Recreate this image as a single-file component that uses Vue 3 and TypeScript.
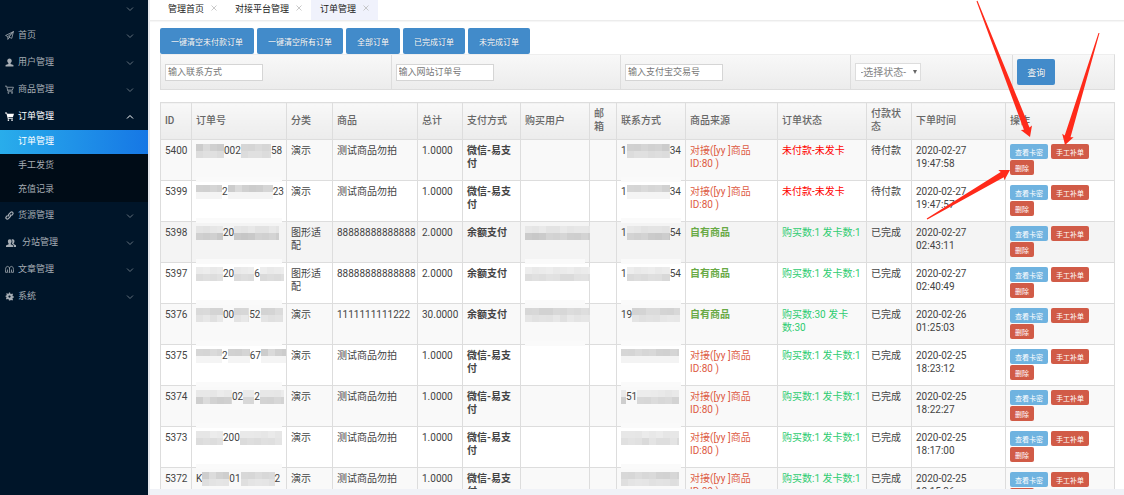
<script setup lang="ts">
import { ref } from 'vue'

interface MenuItem {
  icon: string
  label: string
  open?: boolean
  wide?: boolean
  children?: string[]
}

// A number is the width of a pixelated stretch, a string is readable text.
type Piece = string | number

interface Order {
  id: string
  no: Piece[]
  kind: string
  goods: string
  total: string
  pay: string
  buyer: Piece[]
  contact: Piece[]
  source: 'linked' | 'own'
  status: string
  paid: boolean
  time: string
  shade: [number, number]
}

const menu: MenuItem[] = [
  { icon: 'plane', label: '首页' },
  { icon: 'user', label: '用户管理' },
  { icon: 'cart', label: '商品管理' },
  { icon: 'cartFull', label: '订单管理', open: true, children: ['订单管理', '手工发货', '充值记录'] },
  { icon: 'link', label: '货源管理' },
  { icon: 'users', label: '分站管理', wide: true },
  { icon: 'book', label: '文章管理' },
  { icon: 'gear', label: '系统' },
]

const tabs = ['管理首页', '对接平台管理', '订单管理']
const activeTab = ref(2)
const bulkActions = ['一键清空未付款订单', '一键清空所有订单', '全部订单', '已完成订单', '未完成订单']

const contact = ref('')
const orderNo = ref('')
const tradeNo = ref('')
const state = ref('')

const columns = [
  { name: 'ID', width: 31 },
  { name: '订单号', width: 95 },
  { name: '分类', width: 46 },
  { name: '商品', width: 85 },
  { name: '总计', width: 45 },
  { name: '支付方式', width: 58 },
  { name: '购买用户', width: 69 },
  { name: '邮箱', width: 27 },
  { name: '联系方式', width: 69 },
  { name: '商品来源', width: 92 },
  { name: '订单状态', width: 89 },
  { name: '付款状态', width: 45 },
  { name: '下单时间', width: 94 },
  { name: '操作', width: 109 },
]

const wechat = '微信-易支付'
const balance = '余额支付'
const trial = '测试商品勿拍'

const orders: Order[] = [
  { id: '5400', no: [28, '002', 30, '58'], kind: '演示', goods: trial, total: '1.0000', pay: wechat, buyer: [], contact: ['1', 43, '34'], source: 'linked', status: '未付款-未发卡', paid: false, time: '2020-02-27 19:47:58', shade: [204, 220] },
  { id: '5399', no: [26, '2', 45, '23'], kind: '演示', goods: trial, total: '1.0000', pay: wechat, buyer: [], contact: ['1', 43, '34'], source: 'linked', status: '未付款-未发卡', paid: false, time: '2020-02-27 19:47:57', shade: [204, 243] },
  { id: '5398', no: [27, '20', 45], kind: '图形适配', goods: '88888888888888', total: '2.0000', pay: balance, buyer: [65], contact: ['1', 43, '54'], source: 'own', status: '购买数:1 发卡数:1', paid: true, time: '2020-02-27 02:43:11', shade: [226, 198] },
  { id: '5397', no: [27, '20', 20, '6', 24], kind: '图形适配', goods: '88888888888888', total: '2.0000', pay: balance, buyer: [65], contact: ['1', 43, '54'], source: 'own', status: '购买数:1 发卡数:1', paid: true, time: '2020-02-27 02:40:49', shade: [232, 216] },
  { id: '5376', no: [27, '00', 15, '52', 22], kind: '演示', goods: '1111111111222', total: '30.0000', pay: balance, buyer: [65], contact: ['19', 48], source: 'own', status: '购买数:30 发卡数:30', paid: true, time: '2020-02-26 01:25:03', shade: [210, 224] },
  { id: '5375', no: [26, '2', 22, '67', 25], kind: '演示', goods: trial, total: '1.0000', pay: wechat, buyer: [], contact: [58], source: 'linked', status: '购买数:1 发卡数:1', paid: true, time: '2020-02-25 18:23:12', shade: [204, 243] },
  { id: '5374', no: [36, '02', 11, '2', 24], kind: '演示', goods: trial, total: '1.0000', pay: wechat, buyer: [], contact: [5, '51', 42], source: 'linked', status: '购买数:1 发卡数:1', paid: true, time: '2020-02-25 18:22:27', shade: [230, 206] },
  { id: '5373', no: [27, '200', 42], kind: '演示', goods: trial, total: '1.0000', pay: wechat, buyer: [], contact: [58], source: 'linked', status: '购买数:1 发卡数:1', paid: true, time: '2020-02-25 18:17:00', shade: [230, 218] },
  { id: '5372', no: ['K', 27, '01', 34, '2'], kind: '演示', goods: trial, total: '1.0000', pay: wechat, buyer: [], contact: [58], source: 'linked', status: '购买数:1 发卡数:1', paid: true, time: '2020-02-25 18:15:36', shade: [206, 222] },
]

// Shades of the pixelated tiles, seeded so that each stretch has its own pattern.
function tiles(width: number, shade: [number, number], seed: number) {
  const out: { x: number; y: number; w: number; fill: string }[] = []
  const size = 7
  for (let x = 0, i = 0; x < width; x += size, i++) {
    for (let j = 0; j < 2; j++) {
      const base = shade[j] ?? 220
      const spread = Math.round((250 - base) / 3)
      const grey = base + ((seed * 5 + i * 11 + i * i * 3) % spread)
      out.push({ x, y: j * size, w: Math.min(size, width - x), fill: `rgb(${grey},${grey},${grey})` })
    }
  }
  return out
}

// A tapering shaft that ends in a barbed head.
function arrow(x1: number, y1: number, x2: number, y2: number) {
  const len = Math.hypot(x2 - x1, y2 - y1)
  const ux = (x2 - x1) / len
  const uy = (y2 - y1) / len
  const at = (back: number, side: number) =>
    `${(x2 - ux * back - uy * side).toFixed(1)},${(y2 - uy * back + ux * side).toFixed(1)}`
  return [at(len, 0.5), at(9, 3), at(10, 6), at(0, 0), at(10, -6), at(9, -3), at(len, -0.5)].join(' ')
}

const arrows = [arrow(977, 1, 1030, 137), arrow(1099, 33, 1065, 145), arrow(927, 219, 1010, 170)]
</script>

<template>
  <div class="page">
    <aside class="side">
      <div class="item first">
        <svg class="chev" viewBox="0 0 8 8"><path d="M1 2.5 4 5.5 7 2.5" /></svg>
      </div>
      <nav>
        <template v-for="m in menu" :key="m.label + m.icon">
          <a href="#" class="item" :class="{ open: m.open, wide: m.wide }">
            <svg class="icon" viewBox="0 0 16 16">
              <g v-if="m.icon === 'plane'" class="line"><path d="M15 1 1 8l4 2 10-9-8 10 5 2zM5 10v5l3-4" /></g>
              <path v-else-if="m.icon === 'user'" d="M8 1c2.500 0 4 1.800 4 4 0 1.800-.8 3.200-2 4v1.500l5 2V15H1v-2.500l5-2V9C4.800 8.200 4 6.800 4 5c0-2.200 1.500-4 4-4z" />
              <g v-else-if="m.icon === 'cart'" class="line"><path d="M0 2h3l2 9h9M4 4h11l-2 5H5" /><circle cx="6" cy="14" r="1" /><circle cx="12.500" cy="14" r="1" /></g>
              <g v-else-if="m.icon === 'cartFull'"><path d="M0 1h3.500l.6 2H16l-2 6.500H6l.3 1.500H14v1.500H5L2.500 2.500H0z" /><circle cx="6" cy="14.300" r="1.500" /><circle cx="12.500" cy="14.300" r="1.500" /></g>
              <g v-else-if="m.icon === 'link'" class="line thick"><path d="M7 9.500c-1.500-1.500-1-3 0-4l3-3c2.500-2.500 6 1 3.500 3.500L11.500 8M9 6.500c1.500 1.500 1 3 0 4l-3 3c-2.500 2.500-6-1-3.500-3.500L4.500 8" /></g>
              <g v-else-if="m.icon === 'users'"><path d="M6 2c2 0 3 1.400 3 3.200S8.300 8 7.600 8.600v1.200L11.500 12v2.500H0V12l4.200-2.200V8.600C3.400 8 3 7 3 5.200S4 2 6 2z" /><path d="M10.500 2c2 0 3 1.200 3 3s-.6 2.800-1.300 3.400v1L16 11.500v3h-3.500v-3L9.300 9.300c1.400-2 1.200-5-.3-6.800.4-.4 1-.5 1.500-.5z" /></g>
              <g v-else-if="m.icon === 'book'" class="line"><path d="M1 13V8c0-7 6-7 7-2 1-5 7-5 7 2v5h-3.500V8M4.500 13V8M1 13h3.500M8 5v8M6.500 13h3" /></g>
              <g v-else><path fill-rule="evenodd" d="M7 1h2l.5 2 1.500.6 2-1 1.300 1.300-1 2 .6 1.500 2 .5v2l-2 .5-.6 1.500 1 2-1.300 1.300-2-1-1.500.6L9 15H7l-.5-2-1.500-.6-2 1L1.700 12.100l1-2-.6-1.500L1 8.500v-2l1.500-.5.6-1.500-1-1.500L3.300 2l2 1L6.500 3zM8 6a2 2 0 1 0 0 4 2 2 0 0 0 0-4z" /></g>
            </svg>
            <span class="label">{{ m.label }}</span>
            <svg class="chev" viewBox="0 0 8 8"><path :d="m.open ? 'M1 5.500 4 2.500 7 5.500' : 'M1 2.500 4 5.500 7 2.500'" /></svg>
          </a>
          <div v-if="m.children" class="sub">
            <a v-for="(c, i) in m.children" :key="c" href="#" :class="{ current: i === 0 }">{{ c }}</a>
          </div>
        </template>
      </nav>
    </aside>

    <main class="main">
      <div class="tabs">
        <button v-for="(t, i) in tabs" :key="t" type="button" class="tab" :class="{ active: i === activeTab }" @click="activeTab = i">
          {{ t }}
          <svg class="close" viewBox="0 0 6 6"><path d="M.5.5l5 5M5.500.5l-5 5" /></svg>
        </button>
      </div>

      <div class="content">
        <div class="bulk">
          <button v-for="b in bulkActions" :key="b" type="button" class="btn">{{ b }}</button>
        </div>
        <form class="search" @submit.prevent>
          <div><input v-model="contact" type="text" aria-label="联系方式" placeholder="输入联系方式" /></div>
          <div><input v-model="orderNo" type="text" aria-label="网站订单号" placeholder="输入网站订单号" /></div>
          <div><input v-model="tradeNo" type="text" aria-label="支付宝交易号" placeholder="输入支付宝交易号" /></div>
          <div>
            <span class="select">
              <select v-model="state" aria-label="选择状态"><option value="">-选择状态-</option></select>
              <svg viewBox="0 0 4 4"><path d="M0 0h4L2 4z" /></svg>
            </span>
          </div>
          <div><button type="submit" class="btn query">查询</button></div>
        </form>

        <table class="orders">
          <colgroup><col v-for="c in columns" :key="c.name" :style="{ width: c.width + 'px' }" /></colgroup>
          <thead>
            <tr><th v-for="c in columns" :key="c.name" scope="col">{{ c.name }}</th></tr>
          </thead>
          <tbody>
            <tr v-for="(o, r) in orders" :key="o.id" :class="{ hovered: r === 2 }">
              <td>{{ o.id }}</td>
              <td class="masked">
                <span class="pieces">
                  <template v-for="(p, i) in o.no" :key="i">
                    <svg v-if="typeof p === 'number'" class="mosaic" :width="p" height="14"><rect v-for="(t, k) in tiles(p, o.shade, r + i)" :key="k" :x="t.x" :y="t.y" :width="t.w" height="7" :fill="t.fill" /></svg>
                    <span v-else>{{ p }}</span>
                  </template>
                </span>
              </td>
              <td>{{ o.kind }}</td>
              <td>{{ o.goods }}</td>
              <td>{{ o.total }}</td>
              <td class="pay">{{ o.pay }}</td>
              <td :class="{ masked: o.buyer.length }">
                <span class="pieces">
                  <svg v-for="(p, i) in o.buyer" :key="i" class="mosaic" :width="p" height="14"><rect v-for="(t, k) in tiles(Number(p), o.shade, 1)" :key="k" :x="t.x" :y="t.y" :width="t.w" height="7" :fill="t.fill" /></svg>
                </span>
              </td>
              <td></td>
              <td class="masked">
                <span class="pieces">
                  <template v-for="(p, i) in o.contact" :key="i">
                    <svg v-if="typeof p === 'number'" class="mosaic" :width="p" height="14"><rect v-for="(t, k) in tiles(p, o.shade, r + i + 3)" :key="k" :x="t.x" :y="t.y" :width="t.w" height="7" :fill="t.fill" /></svg>
                    <span v-else>{{ p }}</span>
                  </template>
                </span>
              </td>
              <td v-if="o.source === 'own'" class="own">自有商品</td>
              <td v-else class="linked">对接([yy ]商品<br />ID:80 )</td>
              <td :class="o.paid ? 'done' : 'unpaid'">{{ o.status }}</td>
              <td>{{ o.paid ? '已完成' : '待付款' }}</td>
              <td class="time">{{ o.time }}</td>
              <td>
                <div class="ops">
                  <button type="button" class="info">查看卡密</button>
                  <button type="button">手工补单</button>
                  <button type="button">删除</button>
                </div>
              </td>
            </tr>
          </tbody>
        </table>
      </div>
      <div class="foot"></div>
    </main>

    <svg class="arrows" width="1124" height="495" viewBox="0 0 1124 495">
      <polygon v-for="a in arrows" :key="a" :points="a" />
    </svg>
  </div>
</template>

<style>
body {
  margin: 0;
  overflow: hidden;
}
</style>

<style scoped>
.page {
  position: relative;
  display: flex;
  height: 100vh;
  overflow: hidden;
  background: #fff;
  color: #444;
  font-family: Roboto, "Noto Sans CJK SC", sans-serif;
  font-size: 10px;
  line-height: 13px;
}
.page * {
  box-sizing: border-box;
}
button,
input,
select {
  margin: 0;
  font-family: inherit;
}
.side {
  flex: none;
  width: 148px;
  background: #001529;
  font-size: 9px;
}
.item {
  display: flex;
  align-items: center;
  height: 27px;
  padding: 0 14px 0 5px;
  color: #a6adb4;
  text-decoration: none;
}
.item.first {
  height: 22px;
  padding-bottom: 4px;
}
.item.open {
  color: #fff;
}
.icon {
  width: 9px;
  height: 9px;
  margin-right: 4px;
  fill: currentColor;
}
.wide .icon {
  width: 12px;
  height: 10px;
  margin-right: 5px;
}
.line {
  fill: none;
  stroke: currentColor;
  stroke-width: 1.4;
}
.thick {
  stroke-width: 2.2;
}
.chev {
  width: 8px;
  height: 8px;
  margin-left: auto;
  fill: none;
  stroke: #63707c;
}
.open .chev {
  stroke: #fff;
}
.sub {
  background: #000c17;
}
.sub a {
  display: block;
  height: 24px;
  padding-left: 18px;
  color: #a6adb4;
  line-height: 23px;
  text-decoration: none;
}
.sub .current {
  background: linear-gradient(90deg, #29adeb, #1677e5);
  color: #fff;
}
.main {
  display: flex;
  flex: 1;
  flex-direction: column;
  min-width: 0;
  border-left: 2px solid #e6e8ed;
}
.tabs {
  display: flex;
  flex: none;
  height: 21px;
  padding-left: 9px;
  border-bottom: 1px solid #ececec;
  box-shadow: 0 1px 1px #f6f6f6;
}
.tab {
  display: flex;
  align-items: center;
  gap: 7px;
  padding: 0 9px 4px;
  border: 0;
  background: none;
  color: #222;
  font-size: 9px;
}
.tab.active {
  background: #f0f2fc;
}
.close {
  width: 6px;
  height: 6px;
  stroke: #bbb;
  stroke-width: 0.8;
}
.content {
  flex: 1;
  min-height: 0;
  padding: 7px 9px 0 10px;
  overflow: hidden;
}
.foot {
  flex: none;
  height: 6px;
  background: #f0f2f7;
}
.bulk {
  display: flex;
  gap: 3px;
}
.btn {
  height: 26px;
  padding: 0 11px;
  border: 0;
  border-radius: 2px;
  background: #428bca;
  color: #fff;
  font-size: 8px;
  text-shadow: 0 0 1px #2a6496;
}
.btn.query {
  padding: 0 10px;
  font-size: 9px;
}
.search {
  display: grid;
  grid-template-columns: 230fr 230fr 230fr 163fr 102fr;
  height: 36px;
  border: 1px solid #ddd;
  border-top-color: #eee;
  background: linear-gradient(#f8f8f8, #ececec);
}
.search > div {
  display: flex;
  align-items: center;
  padding-left: 4px;
}
.search > div + div {
  border-left: 1px solid #ddd;
}
.search input {
  width: 98px;
  height: 17px;
  padding: 0 2px;
  border: 1px solid #d5d5d5;
  background: #fff;
  color: #555;
  font-size: 9px;
}
.search input::placeholder {
  color: #777;
}
.select {
  position: relative;
  display: block;
}
.select select {
  width: 66px;
  height: 18px;
  padding: 0 5px;
  border: 1px solid #ddd;
  border-radius: 0;
  background: #fff;
  appearance: none;
  color: #858585;
  font-size: 10px;
}
.select svg {
  position: absolute;
  top: 7px;
  right: 4px;
  width: 4px;
  height: 4px;
  fill: #666;
}
.orders {
  width: 100%;
  margin-top: 12px;
  border-collapse: collapse;
  table-layout: fixed;
}
.orders th,
.orders td {
  padding: 4px 4px 0;
  border: 1px solid #ddd;
  text-align: left;
  vertical-align: top;
}
.orders th {
  height: 37px;
  padding: 0 4px 2px;
  background: linear-gradient(#f8f8f8, #ececec);
  color: #666;
  font-weight: 500;
  vertical-align: middle;
}
.orders td {
  height: 41px;
}
.orders tbody tr {
  background: #fff;
}
.orders tbody tr:nth-child(odd) {
  background: #f9f9f9;
}
.orders tbody tr.hovered {
  background: #f4f4f4;
}
.orders .pay {
  font-weight: 700;
}
.orders .own {
  color: #69aa46;
  font-weight: 700;
}
.orders .linked {
  color: #dd5a43;
  white-space: nowrap;
}
.orders .unpaid {
  color: #f00;
}
.orders .done {
  color: #2ecc71;
}
.orders .time {
  padding-right: 30px;
}
.pieces {
  display: flex;
  height: 13px;
}
.mosaic {
  flex: none;
}
.orders .masked {
  position: relative;
}
.masked::after {
  position: absolute;
  right: 4px;
  bottom: -2px;
  left: 4px;
  height: 5px;
  background: #fafafa;
  content: "";
}
.ops {
  display: flex;
  flex-wrap: wrap;
  gap: 1px 3px;
}
.ops button {
  height: 15px;
  padding: 0 5px;
  border: 0;
  border-radius: 2px;
  background: #d15b47;
  color: #fff;
  font-size: 7px;
}
.ops .info {
  background: #6fb3e0;
}
.arrows {
  position: absolute;
  top: 0;
  right: 0;
  fill: #ff2a1a;
  pointer-events: none;
}
</style>
